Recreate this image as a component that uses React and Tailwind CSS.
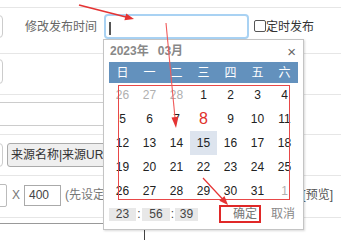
import React from "react";

const days = [
  [26, 27, 28, 1, 2, 3, 4],
  [5, 6, 7, 8, 9, 10, 11],
  [12, 13, 14, 15, 16, 17, 18],
  [19, 20, 21, 22, 23, 24, 25],
  [26, 27, 28, 29, 30, 31, 1],
];

export default function App() {
  return (
    <div className="relative w-[341px] h-[240px] overflow-hidden bg-white font-['Liberation_Sans','Noto_Sans_CJK_SC',sans-serif] text-[12px] text-[#333]">
      {/* background rows */}
      <div className="h-[8px] border-b border-[#e6e6e6]" />
      <div className="h-[46px] border-b border-[#e6e6e6] flex items-start pt-[7px]">
        <div className="shrink-0 w-[20px] -ml-[17px] h-[23px] border border-[#ccc] rounded-[4px]" />
        <div className="ml-[22px] w-[79px] mt-[1px] leading-[23px] text-[12px] text-[#666] whitespace-nowrap">修改发布时间</div>
        <div className="-mt-[1px] w-[145px] h-[25px] border-2 border-[#a9d2f3] rounded-[4px] flex items-start">
          <div className="ml-[3px] mt-[6px] w-[2px] h-[13px] bg-[#555]" />
        </div>
        <div className="ml-[5px] mt-[5px] w-[12px] h-[12px] border border-[#555] rounded-[2px]" />
        <div className="mt-[2px] leading-[20px] text-[12px] text-[#333] whitespace-nowrap">定时发布</div>
      </div>
      <div className="h-[41px] border-b border-[#e6e6e6] flex items-start pt-[5px]">
        <div className="shrink-0 w-[20px] -ml-[17px] h-[25px] border border-[#ccc] rounded-[4px]" />
      </div>
      <div className="h-[40px] border-b border-[#e6e6e6] flex items-start pt-[7px]">
        <div className="shrink-0 w-[220px] -ml-[4px] h-[24px] border border-[#ccc] rounded-[4px]" />
      </div>
      <div className="h-[41px] border-b border-[#e6e6e6] flex items-start pt-[8px]">
        <div className="shrink-0 w-[20px] -ml-[17px] h-[24px] border border-[#ccc] rounded-[4px]" />
        <div className="shrink-0 ml-[4px] w-[100px] h-[24px] bg-[#efefef] border border-[#aaa] rounded-[3px] pl-[3px] leading-[22px] text-[12px] text-[#333] whitespace-nowrap overflow-hidden">
          来源名称|来源UR
        </div>
      </div>
      <div className="h-[42px] border-b border-[#e6e6e6] flex items-start pt-[8px]">
        <div className="shrink-0 w-[24px] -ml-[17px] h-[23px] border border-[#bbb] rounded-[2px]" />
        <div className="ml-[5px] leading-[23px] text-[12px] text-[#777]">X</div>
        <div className="ml-[4px] mt-[1px] w-[37px] h-[21px] border border-[#aaa] pl-[4px] leading-[19px] text-[12px] text-[#444]">400</div>
        <div className="ml-[4px] leading-[23px] text-[12px] text-[#777] whitespace-nowrap">(先设定</div>
        <div className="ml-auto pr-[8px] leading-[23px] text-[12px] text-[#555] whitespace-nowrap">[预览]</div>
      </div>
      <div className="h-[6px] w-[103px] border-b border-[#999]" />
      <div className="ml-[144px] mt-[4px] w-px h-[14px] bg-[#444]" />

      {/* date picker popup */}
      <div className="absolute left-[103px] top-[39px] w-[201px] h-[191px] border border-[#c4c4c4] bg-white shadow-[1px_1px_2px_rgba(0,0,0,0.15)]">
        <div className="h-[22px] flex items-center pl-[6px] pr-[7px]">
          <span className="font-bold text-[12px] text-[#888]">2023年</span>
          <span className="ml-[9px] font-bold text-[12px] text-[#888]">03月</span>
          <span className="ml-auto text-[15px] leading-none text-[#666]">×</span>
        </div>
        <div className="ml-[5px] w-[189px] h-[21px] bg-[#6391bd] grid grid-cols-7 items-center text-center text-white text-[12px]">
          {["日", "一", "二", "三", "四", "五", "六"].map((d) => (
            <div key={d}>{d}</div>
          ))}
        </div>
        <div className="ml-[5px] w-[189px] grid grid-cols-7">
          {days.map((row, ri) =>
            row.map((d, ci) => {
              const gray = (ri === 0 && ci < 3) || (ri === 4 && ci === 6);
              const red = ri === 1 && ci === 3;
              const sel = ri === 2 && ci === 3;
              return (
                <div
                  key={ri + "-" + ci}
                  className={
                    "h-[24px] flex items-center justify-center leading-[16px] " +
                    (sel ? "bg-[#dde4ee] " : "") +
                    (red
                      ? "text-[16px] text-[#e0302c]"
                      : gray
                      ? "text-[12px] text-[#b0b0b0]"
                      : "text-[12px] text-[#222]")
                  }
                >
                  {d}
                </div>
              );
            })
          )}
        </div>
        <div className="flex items-start pt-[5px]">
          <div className="ml-[5px] w-[27px] h-[13px] bg-[#e8e8e8] text-center leading-[13px] text-[12px] text-[#444]">23</div>
          <div className="w-[6px] text-center leading-[13px] text-[12px] text-[#444]">:</div>
          <div className="w-[28px] h-[13px] bg-[#e8e8e8] text-center leading-[13px] text-[12px] text-[#444]">56</div>
          <div className="w-[5px] text-center leading-[13px] text-[12px] text-[#444]">:</div>
          <div className="w-[23px] h-[13px] bg-[#e8e8e8] text-center leading-[13px] text-[12px] text-[#444]">39</div>
          <div className="ml-[21px] -mt-[3px] w-[42px] h-[18px] border-2 border-[#e02828] text-right pr-[2px] leading-[14px] text-[12px] text-[#777]">确定</div>
          <div className="ml-[10px] -mt-[2px] leading-[16px] text-[12px] text-[#888]">取消</div>
        </div>
        <div className="absolute left-[14px] top-[45px] w-[172px] h-[115px] border border-[#e84848]" />
      </div>

      {/* red annotation arrows */}
      <svg className="absolute left-0 top-0 pointer-events-none" width="341" height="240" viewBox="0 0 341 240">
        <line x1="79" y1="5" x2="126" y2="17" stroke="#e53333" strokeWidth="1.8" />
        <polygon points="134,19 124.4,20.2 126.2,13.4" fill="#e53333" />
        <line x1="166" y1="23" x2="175" y2="118" stroke="#f05a5a" strokeWidth="1.1" />
        <polygon points="176,128 171.5,117.4 178.4,116.7" fill="#e53333" />
        <line x1="203" y1="178" x2="222.5" y2="199" stroke="#e53333" strokeWidth="1.2" />
        <polygon points="228,205 219.3,200.8 224.5,196" fill="#e53333" />
      </svg>
    </div>
  );
}
